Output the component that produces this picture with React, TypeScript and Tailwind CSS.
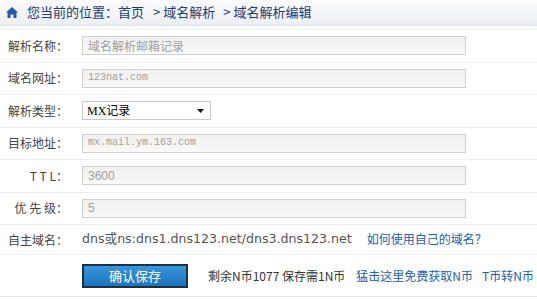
import React from "react";

const cjk = { fontFamily: '"Noto Sans CJK SC", "Liberation Sans", sans-serif' };

function Label({ children }: { children: React.ReactNode }) {
  return (
    <div className="w-[68px] shrink-0 text-right text-[12px] text-[#444] whitespace-pre" style={cjk}>
      {children}
    </div>
  );
}

function Row({ label, children, h = "h-[32.5px]" }: { label: string; children: React.ReactNode; h?: string }) {
  return (
    <div className={`flex items-center ${h} border-b border-[#eeeeee]`}>
      <Label>{label}</Label>
      <div className="ml-[14px] flex items-center">{children}</div>
    </div>
  );
}

function Input({ value, mono, sans }: { value: string; mono?: boolean; sans?: boolean }) {
  return (
    <div
      className="w-[384px] h-[19px] border border-[#cfcfcf] bg-gradient-to-b from-[#f0f0f0] to-[#f8f8f8] flex items-center pl-[5px] text-[#a0a0a0] leading-none"
      style={
        mono
          ? { fontFamily: '"Liberation Mono", monospace', fontSize: "10px" }
          : sans
          ? { fontFamily: '"Liberation Sans", sans-serif', fontSize: "12px" }
          : { ...cjk, fontSize: "12px" }
      }
    >
      {value}
    </div>
  );
}

export default function App() {
  return (
    <div className="w-[537px] h-[299px] bg-white overflow-hidden" style={cjk}>
      <div className="h-[26px] flex items-center bg-gradient-to-b from-[#fbfbfc] to-[#eceff3] border-b-2 border-[#e1e9f5]">
        <svg width="12" height="11" viewBox="0 0 12 11" className="ml-[6px]">
          <path d="M6 0 L12 5.5 L10.5 5.5 L10.5 11 L7.5 11 L7.5 7.5 L4.5 7.5 L4.5 11 L1.5 11 L1.5 5.5 L0 5.5 Z" fill="#2359a8" />
        </svg>
        <div className="ml-[9px] flex items-center text-[13px] text-[#1b3c75] whitespace-pre">
          <span>您当前的位置：首页</span>
          <span className="ml-[9px]">&gt;</span>
          <span className="ml-[3px]">域名解析</span>
          <span className="ml-[8px]">&gt;</span>
          <span className="ml-[3px]">域名解析编辑</span>
        </div>
      </div>
      <div className="h-[4px] border-b border-[#eeeeee]" />
      <Row label="解析名称：">
        <Input value="域名解析邮箱记录" />
      </Row>
      <Row label="域名网址：">
        <Input value="123nat.com" mono />
      </Row>
      <Row label="解析类型：">
        <div className="w-[129px] h-[19px] border border-[#c8c8c8] bg-white flex items-center justify-between pl-[4px] pr-[6px]">
          <span className="text-[12px] text-black leading-none" style={{ fontFamily: '"Liberation Serif", "Noto Sans CJK SC", serif' }}>
            MX<span style={cjk}>记录</span>
          </span>
          <svg width="7" height="4" viewBox="0 0 7 4">
            <path d="M0 0 L7 0 L3.5 4 Z" fill="#111" />
          </svg>
        </div>
      </Row>
      <Row label="目标地址：">
        <Input value="mx.mail.ym.163.com" mono />
      </Row>
      <Row label="T T L：">
        <Input value="3600" sans />
      </Row>
      <Row label="优 先 级：">
        <Input value="5" sans />
      </Row>
      <Row label="自主域名：" h="h-[30px]">
        <span className="text-[#555]" style={{ fontFamily: '"DejaVu Sans", "Noto Sans CJK SC", sans-serif', fontSize: "12.6px" }}>
          dns或ns:dns1.dns123.net/dns3.dns123.net
        </span>
        <span className="ml-[15px] text-[12px] text-[#1d5fb0]">如何使用自己的域名？</span>
      </Row>
      <div className="h-[42px] flex items-center border-b border-[#dfe6f0]">
        <div className="ml-[82px] w-[106px] h-[24px] border-2 border-[#1c2f45] bg-gradient-to-b from-[#3796dc] to-[#1e73bd] flex items-center justify-center text-white text-[13px]">
          确认保存
        </div>
        <span className="ml-[20px] text-[12px] text-[#333]">剩余N币1077 保存需1N币</span>
        <span className="ml-[11px] text-[12px] text-[#1d5fb0]">猛击这里免费获取N币</span>
        <span className="ml-[9px] text-[12px] text-[#1d5fb0]">T币转N币</span>
      </div>
    </div>
  );
}
